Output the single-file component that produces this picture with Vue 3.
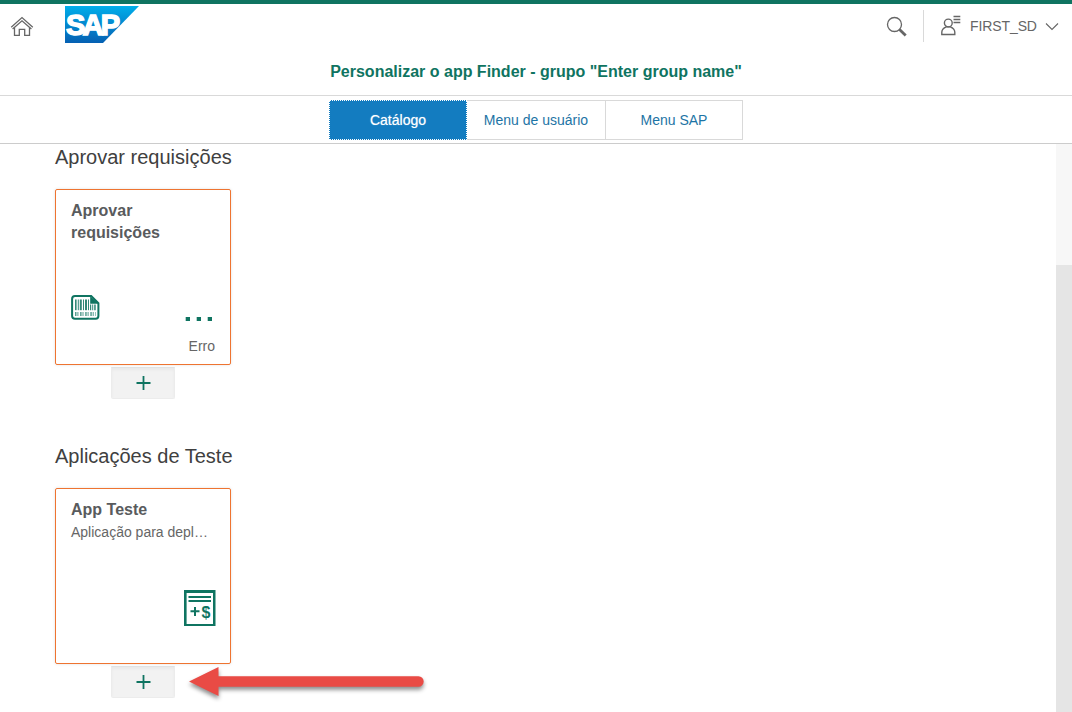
<script setup>
const tabs = ['Catálogo', 'Menu de usuário', 'Menu SAP']
const bars = [
  [0, 1.6], [2.8, 1], [4.8, 2], [8, 1], [10, 2], [13, 1]
]
</script>

<template>
  <div class="page">
    <header class="shell">
      <svg class="home" width="24" height="22" viewBox="0 0 24 22" fill="none" stroke="#666" stroke-width="1.3">
        <path d="M1.2 11.2 12 1.6l10.8 9.6" />
        <path d="M2.6 13 12 4.8l9.4 8.2" />
        <path d="M4.5 11.5v7.8h4.8v-6h5.4v6h4.8v-7.8" />
      </svg>
      <svg class="logo" width="74" height="37" viewBox="0 0 74 37">
        <defs>
          <linearGradient id="sap" x1="0" y1="0" x2="0" y2="1">
            <stop offset="0" stop-color="#00aeea" />
            <stop offset="1" stop-color="#0560b3" />
          </linearGradient>
        </defs>
        <path d="M0 0h74L38 37H0z" fill="url(#sap)" />
        <text x="1" y="28.5" fill="#fff" stroke="#fff" stroke-width="1.5">SAP</text>
      </svg>
      <div class="spacer"></div>
      <svg class="search" width="22" height="22" viewBox="0 0 22 22" fill="none" stroke="#666">
        <circle cx="8.5" cy="8.5" r="7" stroke-width="1.3" />
        <path d="m13.5 13.5 6.2 6" stroke-width="2.8" />
      </svg>
      <div class="user">
        <svg class="person" width="22" height="22" viewBox="0 0 22 22" fill="none" stroke="#666" stroke-width="1.4">
          <circle cx="8.3" cy="8" r="3.9" />
          <path d="M1.8 19.5v-2.2c0-2.7 2.2-4.5 4.5-5.4h4c2.3.9 4.5 2.7 4.5 5.4v2.2z" />
          <path d="M13.5 1.5h6.8M13.5 4.5h6.8M13.5 7.5h6.8" stroke-width="1.3" />
        </svg>
        <span>FIRST_SD</span>
        <svg class="chevron" width="14" height="9" viewBox="0 0 14 9" fill="none" stroke="#666" stroke-width="1.1">
          <path d="m1 1.5 6 6 6-6" />
        </svg>
      </div>
    </header>
    <h1>Personalizar o app Finder - grupo "Enter group name"</h1>
    <nav>
      <button v-for="(tab, i) in tabs" :key="tab" :class="{ active: i === 0 }">{{ tab }}</button>
    </nav>
    <main>
      <div class="content">
        <section>
          <h2>Aprovar requisições</h2>
          <div class="tile">
            <h3>Aprovar requisições</h3>
            <div class="tile-body">
              <svg class="barcode" width="29" height="25" viewBox="0 0 29 25">
                <path d="M4 1.1h16.2l7.2 7V21q0 2.7-2.7 2.7H4Q1.1 23.7 1.1 21V4Q1.1 1.1 4 1.1z" fill="none" stroke="#0f7461" stroke-width="2" />
                <path d="M19.2 1.2v7.5h8.6z" fill="#0f7461" />
                <g fill="#0f7461" opacity=".85">
                  <rect v-for="b in bars" :key="b[0]" :x="4 + b[0]" y="4.5" :width="b[1]" height="10.7" />
                  <path d="M19 9.5h1.2v5.7H19zM21.2 9.5h1v5.7h-1zM23.2 9.5h1.5v5.7h-1.5z" />
                </g>
                <path d="M4 19h21" stroke="#0f7461" stroke-width="3.8" stroke-dasharray="1.5 .9 1 1.7" opacity=".7" />
              </svg>
              <div class="dots"><i></i><i></i><i></i></div>
            </div>
            <div class="footer">Erro</div>
          </div>
          <button class="add" aria-label="Adicionar">
            <svg width="15" height="15" viewBox="0 0 15 15"><path d="M.5 7h14M7.5 0v14" stroke="#0f7461" stroke-width="1.8" /></svg>
          </button>
        </section>
        <section>
          <h2>Aplicações de Teste</h2>
          <div class="tile">
            <h3>App Teste</h3>
            <p>Aplicação para depl…</p>
            <svg class="sheet" width="32" height="36" viewBox="0 0 32 36">
              <path d="M0 0h31.5v36H0zM2.6 3v31H29V3z" fill="#0f7461" fill-rule="evenodd" />
              <path d="M4.5 7H27M4.5 11H27" stroke="#0f7461" stroke-width="2" />
              <path d="M6.5 21.3h9M11 17v9" stroke="#0f7461" stroke-width="2" />
              <text x="17.4" y="28">$</text>
            </svg>
          </div>
          <button class="add" aria-label="Adicionar">
            <svg width="15" height="15" viewBox="0 0 15 15"><path d="M.5 7h14M7.5 0v14" stroke="#0f7461" stroke-width="1.8" /></svg>
          </button>
        </section>
      </div>
      <div class="track"><div class="thumb"></div></div>
    </main>
    <svg class="arrow" width="250" height="50" viewBox="0 0 250 50">
      <path d="M4 21.5 33.5 7v9.3h200a5.2 5.2 0 0 1 0 10.4h-200V36z" fill="#e94b45" />
    </svg>
  </div>
</template>

<style>
body { margin: 0; overflow: hidden; }
</style>

<style scoped>
.page {
  position: relative;
  display: flex;
  flex-direction: column;
  box-sizing: border-box;
  width: 1072px;
  height: 712px;
  overflow: hidden;
  border-top: 4px solid #0f7461;
  background: #fff;
  font-family: "Liberation Sans", Arial, sans-serif;
}
.page * { box-sizing: border-box; }
svg { display: block; flex: none; }
.shell {
  flex: none;
  display: flex;
  align-items: flex-start;
  height: 44px;
  padding-left: 10px;
}
.home { margin-top: 12px; }
.logo { margin: 2px 0 0 31px; }
.logo text { font: bold 29px "Liberation Sans", Arial, sans-serif; letter-spacing: -2.8px; }
.spacer { flex: 1; }
.search { margin: 12px 15px 0 0; }
.user {
  display: flex;
  align-items: center;
  width: 149px;
  height: 32px;
  margin-top: 6px;
  padding-left: 16px;
  border-left: 1px solid #d9d9d9;
  color: #666;
  font-size: 14px;
}
.user span { width: 68px; margin: 0 7px 0 8px; letter-spacing: -.1px; white-space: nowrap; }
h1 {
  flex: none;
  height: 48px;
  margin: 0;
  border-bottom: 1px solid #d9d9d9;
  color: #0f7461;
  font-size: 16px;
  line-height: 48px;
  text-align: center;
}
nav {
  flex: none;
  display: flex;
  justify-content: center;
  height: 48px;
  padding-top: 4px;
  border-bottom: 1px solid #ccc;
}
button { padding: 0; font-family: inherit; }
nav button {
  width: 137px;
  height: 40px;
  border: 1px solid #d9d9d9;
  border-left: 0;
  background: #fff;
  color: #1d74a5;
  font-size: 14px;
}
nav button:nth-child(2) { width: 139px; }
nav button.active {
  width: 138px;
  border: 1px dotted #fff;
  background: #137cc0;
  color: #fff;
  text-shadow: 0 0 1px rgba(255, 255, 255, .6);
}
main { flex: 1; display: flex; min-height: 0; }
.content { flex: 1; padding: 0 0 0 55px; overflow: hidden; }
section { height: 299px; }
h2 {
  height: 45px;
  margin: 0;
  color: #404040;
  font-size: 20px;
  font-weight: normal;
  line-height: 26px;
}
.tile {
  display: flex;
  flex-direction: column;
  width: 176px;
  height: 176px;
  padding: 10px 15px 9px;
  border: 1px solid #ee7431;
  border-radius: 2px;
  box-shadow: 0 0 3px rgba(0, 0, 0, .12);
}
h3 { margin: 0; color: #595b5d; font-size: 16px; line-height: 22px; }
p { margin: 0; color: #666; font-size: 14px; line-height: 22px; white-space: nowrap; }
.tile-body { display: flex; justify-content: space-between; margin-top: 51px; }
.dots { display: flex; gap: 7px; margin: 22px 3px 0 0; }
.dots i { width: 4px; height: 4px; background: #0f7461; box-shadow: -1px 0 rgba(15, 116, 97, .3); }
.footer { margin-top: auto; color: #666; font-size: 14px; line-height: 18px; text-align: right; }
.sheet { margin: 47px 0 0 113px; }
.sheet text { font: bold 16px "Liberation Sans", Arial, sans-serif; fill: #0f7461; }
.add {
  display: flex;
  align-items: center;
  justify-content: center;
  width: 64px;
  height: 32px;
  margin: 2px 0 0 56px;
  border: 1px solid #ececec;
  border-top-color: #e2e2e2;
  border-radius: 0 0 2px 2px;
  background: #f2f2f2;
  box-shadow: inset 0 2px 3px rgba(0, 0, 0, .04);
}
.track { width: 16px; padding-top: 121px; background: #f7f7f7; }
.thumb { height: 100%; background: #e5e5e5; }
.arrow { position: absolute; left: 185px; top: 656px; filter: drop-shadow(0 3px 2px rgba(0, 0, 0, .45)); }
</style>
